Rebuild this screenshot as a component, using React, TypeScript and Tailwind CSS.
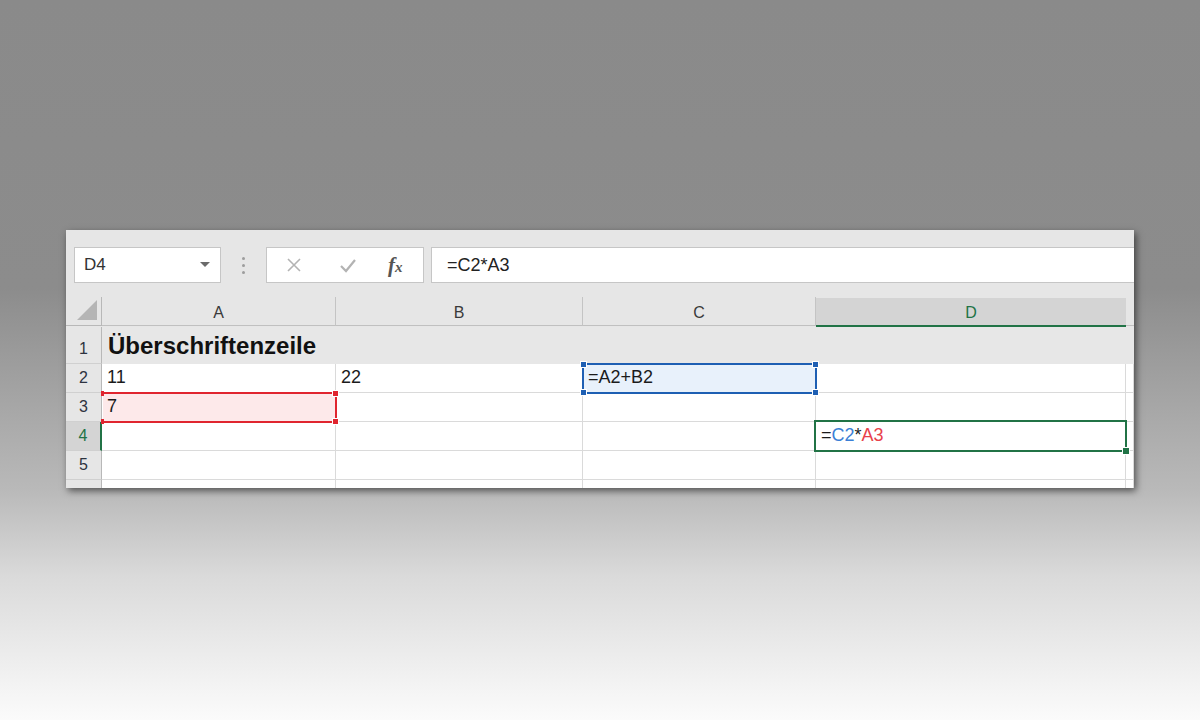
import React from "react";

const font = { fontFamily: '"Liberation Sans", Arial, sans-serif' };

function Corner({ color, className }: { color: string; className: string }) {
  return (
    <div
      className={`absolute w-[7px] h-[7px] border border-white ${className}`}
      style={{ backgroundColor: color }}
    />
  );
}

function RowHeader({ n, h, active }: { n: string; h: string; active?: boolean }) {
  return (
    <div
      className={`${h} flex items-end justify-center pb-[2px] text-[16px] border-b border-[#d0d0d0] ${
        active
          ? "bg-[#d4d4d4] text-[#217346] border-r-2 border-r-[#217346]"
          : "bg-[#e6e6e6] text-[#2d3340] border-r border-r-[#b8b8b8]"
      }`}
    >
      {n}
    </div>
  );
}

function Cell({ h, children, className = "" }: { h: string; children?: React.ReactNode; className?: string }) {
  return (
    <div
      className={`${h} relative flex items-end pl-[5px] pb-[1px] text-[18px] text-[#1b1b1b] bg-white border-r border-b border-[#dadada] ${className}`}
    >
      {children}
    </div>
  );
}

export default function App() {
  const rowH = "h-[29px]";
  return (
    <div
      className="min-h-[720px] w-[1200px] pt-[230px] pl-[66px] bg-[linear-gradient(180deg,#8a8a8a_0%,#8c8c8c_40%,#b9b9b9_68%,#dadada_80%,#fbfbfb_100%)]"
      style={font}
    >
      <div className="w-[1068px] h-[258px] bg-[#e6e6e6] overflow-hidden shadow-[2px_3px_7px_rgba(0,0,0,0.55)]">
        {/* formula bar */}
        <div className="flex items-center pt-[17px] pl-[8px] h-[53px]">
          <div className="w-[147px] h-[36px] bg-white border border-[#c6c6c6] flex items-center justify-between pl-[9px] pr-[10px]">
            <span className="text-[17px] text-[#333]">D4</span>
            <svg width="10" height="6" viewBox="0 0 10 6">
              <path d="M0 0 L10 0 L5 5 Z" fill="#6b6b6b" />
            </svg>
          </div>
          <div className="w-[45px] flex flex-col items-center gap-[4px]">
            <div className="w-[3px] h-[3px] rounded-full bg-[#9d9d9d]" />
            <div className="w-[3px] h-[3px] rounded-full bg-[#9d9d9d]" />
            <div className="w-[3px] h-[3px] rounded-full bg-[#9d9d9d]" />
          </div>
          <div className="w-[158px] h-[36px] bg-white border border-[#c6c6c6] flex items-center">
            <svg className="ml-[19px]" width="16" height="16" viewBox="0 0 16 16">
              <path d="M2 2 L14 14 M14 2 L2 14" stroke="#b3b3b3" strokeWidth="1.6" fill="none" />
            </svg>
            <svg className="ml-[37px]" width="18" height="16" viewBox="0 0 18 16">
              <path d="M2 9 L7 14 L16 3" stroke="#b3b3b3" strokeWidth="2.2" fill="none" />
            </svg>
            <span
              className="ml-[31px] text-[21px] italic font-bold text-[#555] leading-none"
              style={{ fontFamily: '"Liberation Serif", "Times New Roman", serif' }}
            >
              f<span className="text-[15px]">x</span>
            </span>
          </div>
          <div className="ml-[7px] flex-1 h-[36px] bg-white border-y border-l border-[#c6c6c6] flex items-center pl-[15px] text-[18px] text-[#222]">
            =C2*A3
          </div>
        </div>

        {/* grid */}
        <div className="mt-[14px] grid grid-cols-[36px_234px_247px_233px_310px_8px]">
          {/* column headers */}
          <div className={`${rowH} relative bg-[#e6e6e6] border-r border-b border-[#b8b8b8]`}>
            <svg className="absolute right-[4px] bottom-[5px]" width="20" height="20" viewBox="0 0 20 20">
              <path d="M20 0 L20 20 L0 20 Z" fill="#b5b5b5" />
            </svg>
          </div>
          {["A", "B", "C"].map((c) => (
            <div
              key={c}
              className={`${rowH} flex items-center justify-center pt-[3px] text-[16px] text-[#3a3a3a] bg-[#e6e6e6] border-r border-r-[#c4c4c4] border-b border-b-[#c0c0c0]`}
            >
              {c}
            </div>
          ))}
          <div className={`${rowH} mt-[1px] flex items-center justify-center pt-[2px] text-[16px] text-[#217346] bg-[#d4d4d4] border-b-2 border-[#217346]`}>
            D
          </div>
          <div className={`${rowH} bg-[#e6e6e6] border-b border-[#c0c0c0]`} />

          {/* row 1 */}
          <RowHeader n="1" h="h-[37px]" />
          <div className="h-[37px] bg-[#e7e7e7] flex items-end pl-[6px] pb-0 text-[24px] font-bold text-[#111] whitespace-nowrap">
            Überschriftenzeile
          </div>
          <div className="h-[37px] bg-[#e7e7e7]" />
          <div className="h-[37px] bg-[#e7e7e7]" />
          <div className="h-[37px] bg-[#e7e7e7]" />
          <div className="h-[37px] bg-[#e7e7e7]" />

          {/* row 2 */}
          <RowHeader n="2" h={rowH} />
          <Cell h={rowH}>11</Cell>
          <Cell h={rowH}>22</Cell>
          <Cell h={rowH}>
            <div className="absolute z-10 -left-[1px] -top-[1px] w-[235px] h-[31px] border-2 border-[#1e5fb3] bg-[#e8f1fb]">
              <Corner color="#1e5fb3" className="-left-[4px] -top-[4px]" />
              <Corner color="#1e5fb3" className="-right-[4px] -top-[4px]" />
              <Corner color="#1e5fb3" className="-left-[4px] -bottom-[4px]" />
              <Corner color="#1e5fb3" className="-right-[4px] -bottom-[4px]" />
            </div>
            <span className="relative z-20">=A2+B2</span>
          </Cell>
          <Cell h={rowH} />
          <Cell h={rowH} />

          {/* row 3 */}
          <RowHeader n="3" h={rowH} />
          <Cell h={rowH}>
            <div className="absolute z-10 left-[1px] -top-[1px] w-[234px] h-[31px] border-y-2 border-r-2 border-[#e0252f] bg-[#fde9ea]">
              <div className="absolute -left-[2px] -top-[3px] w-[3px] h-[5px] bg-[#e0252f]" />
              <div className="absolute -left-[2px] -bottom-[3px] w-[3px] h-[5px] bg-[#e0252f]" />
              <Corner color="#e0252f" className="-right-[4px] -top-[4px]" />
              <Corner color="#e0252f" className="-right-[4px] -bottom-[4px]" />
            </div>
            <span className="relative z-20">7</span>
          </Cell>
          <Cell h={rowH} />
          <Cell h={rowH} />
          <Cell h={rowH} />
          <Cell h={rowH} />

          {/* row 4 */}
          <RowHeader n="4" h={rowH} active />
          <Cell h={rowH} />
          <Cell h={rowH} />
          <Cell h={rowH} />
          <Cell h={rowH}>
            <div className="absolute z-10 -left-[2px] -top-[2px] w-[313px] h-[32px] border-2 border-[#217346]">
              <div className="absolute -right-[5px] -bottom-[5px] w-[8px] h-[8px] bg-[#217346] border border-white" />
            </div>
            <span className="relative z-20">
              =<span className="text-[#3b7fd6]">C2</span>*<span className="text-[#e8414b]">A3</span>
            </span>
          </Cell>
          <Cell h={rowH} />

          {/* row 5 */}
          <RowHeader n="5" h={rowH} />
          <Cell h={rowH} />
          <Cell h={rowH} />
          <Cell h={rowH} />
          <Cell h={rowH} />
          <Cell h={rowH} />

          {/* partial row */}
          <div className="h-[9px] bg-[#e6e6e6] border-r border-[#b8b8b8]" />
          <Cell h="h-[9px]" className="pb-0" />
          <Cell h="h-[9px]" className="pb-0" />
          <Cell h="h-[9px]" className="pb-0" />
          <Cell h="h-[9px]" className="pb-0" />
          <Cell h="h-[9px]" className="pb-0" />
        </div>
      </div>
    </div>
  );
}
